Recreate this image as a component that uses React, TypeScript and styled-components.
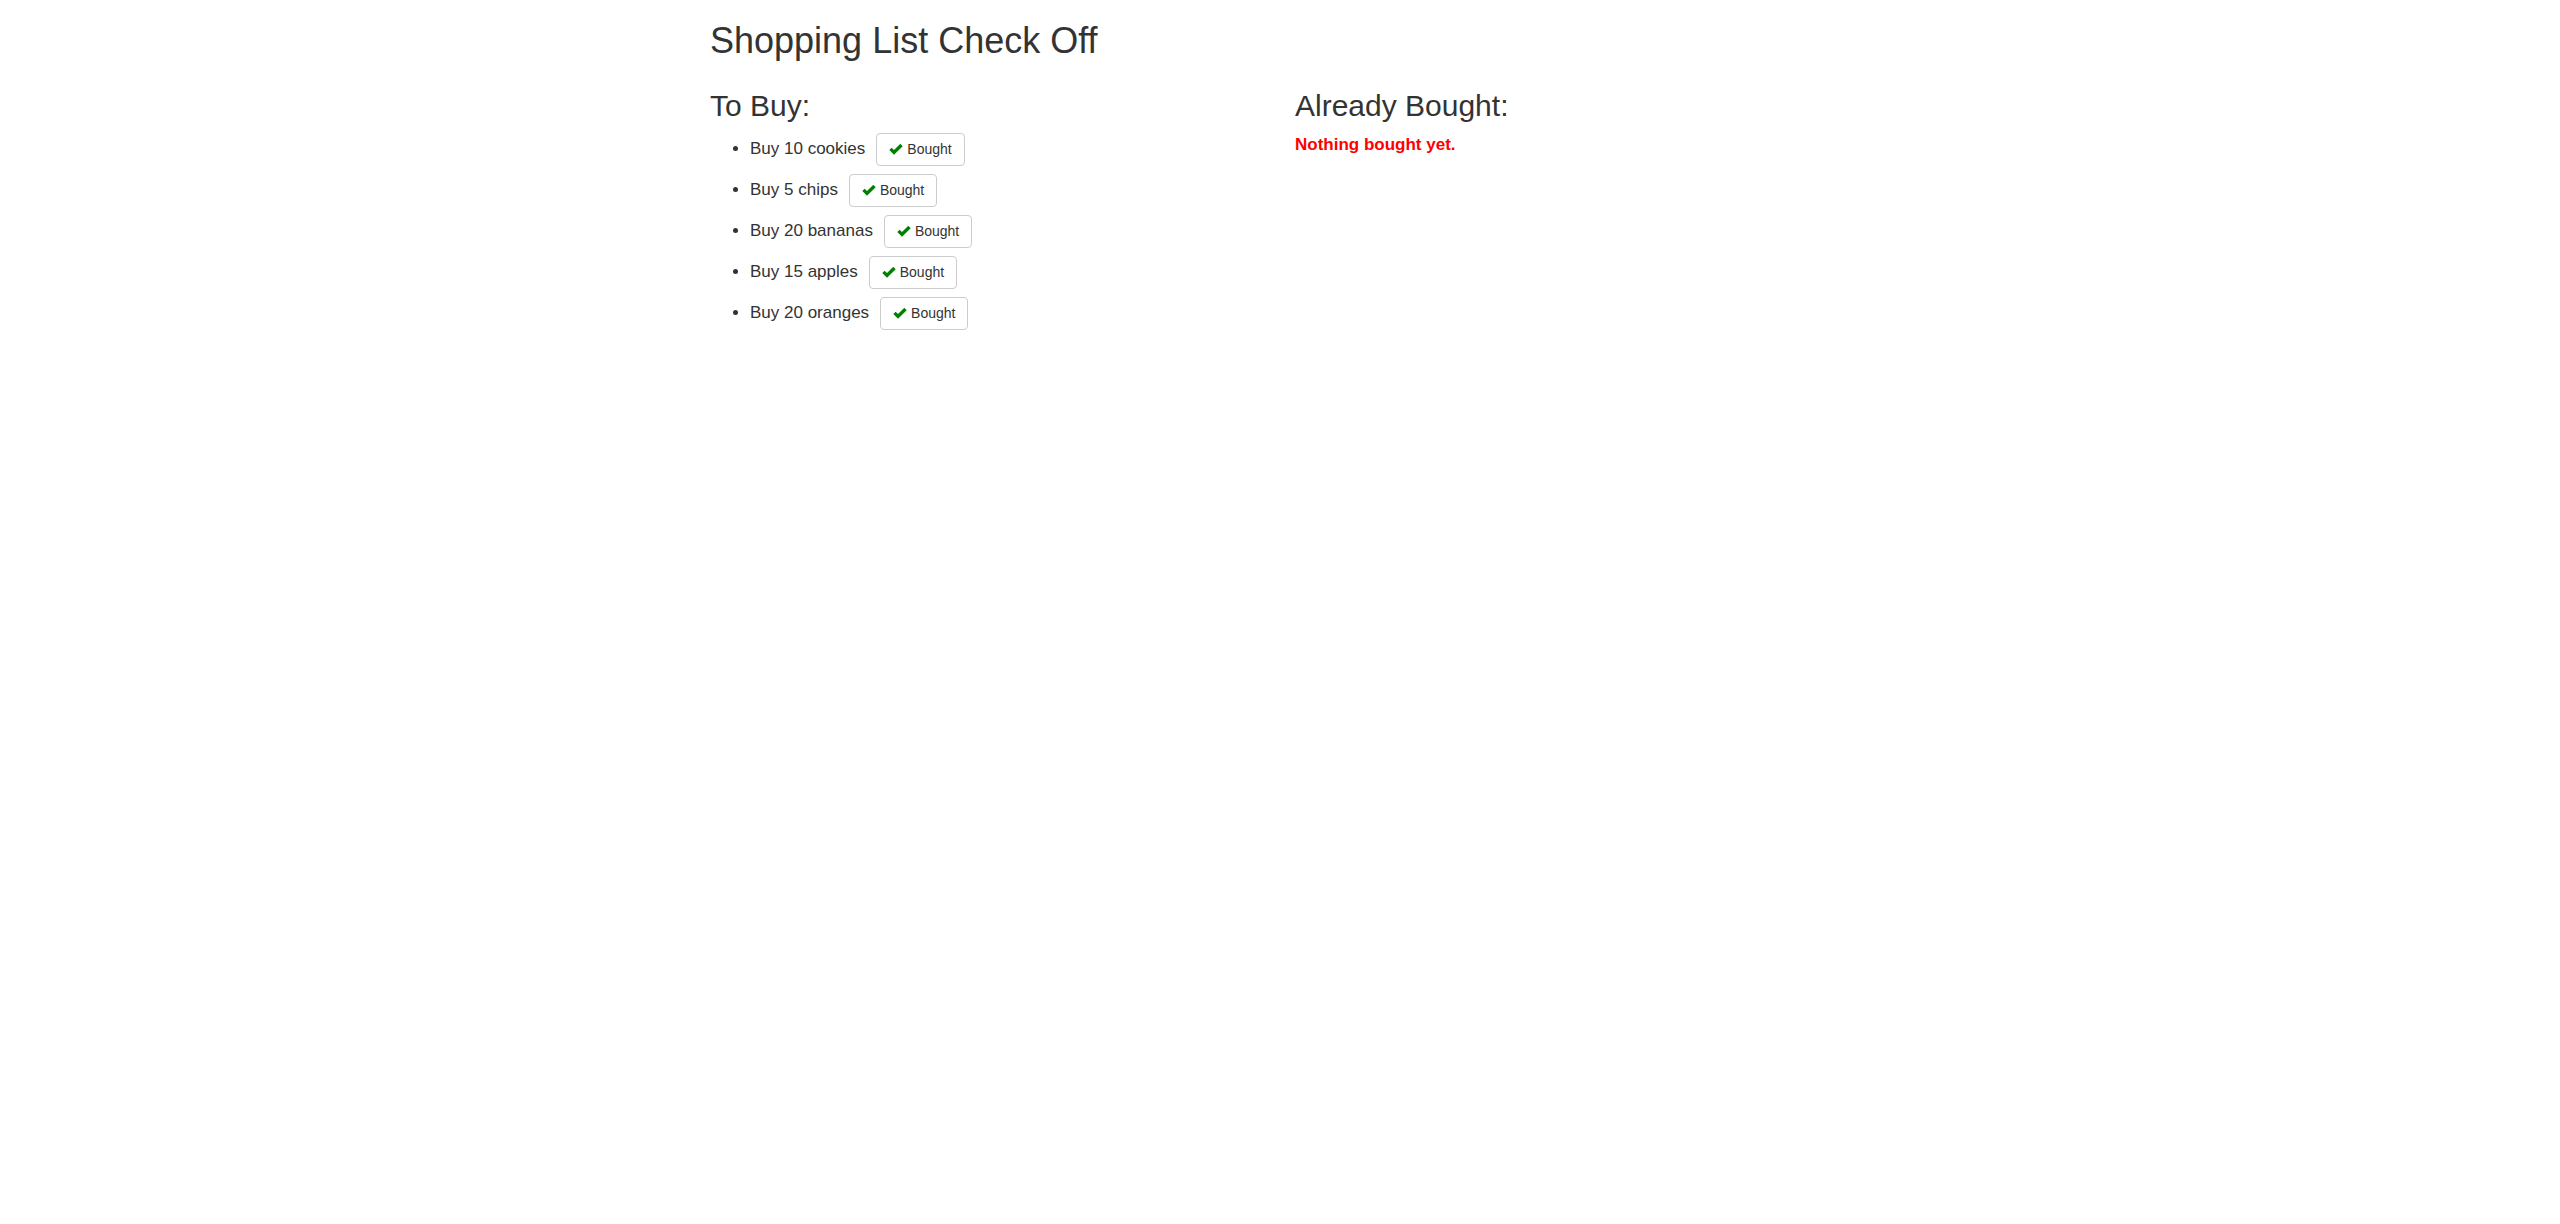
import React from "react";
import styled, { createGlobalStyle } from "styled-components";

const GlobalStyle = createGlobalStyle`
  html, body {
    margin: 0;
    padding: 0;
    background: #fff;
  }
  body {
    font-family: "Liberation Sans", Arial, sans-serif;
    font-size: 14px;
    line-height: 1.42857143;
    color: #333;
  }
  * { box-sizing: border-box; }
`;

const Container = styled.div`
  width: 1170px;
  margin: 0 auto;
  padding: 0 15px;
`;

const Title = styled.h1`
  font-size: 36px;
  font-weight: 500;
  line-height: 1.1;
  margin: 21px 0 10px;
  color: #333;
`;

const Row = styled.div`
  display: flex;
  margin: 0 -15px;
`;

const Col = styled.section`
  width: 50%;
  padding: 0 15px;
`;

const Heading = styled.h2`
  font-size: 30px;
  font-weight: 500;
  line-height: 1.1;
  margin: 18px 0 11px;
  color: #333;
`;

const List = styled.ul`
  margin: 0 0 10px;
  padding-left: 40px;
`;

const Item = styled.li`
  font-size: 17px;
  margin-bottom: 8px;
`;

const Button = styled.button`
  display: inline-block;
  margin-left: 11px;
  padding: 6px 12px;
  font-family: "Liberation Sans", Arial, sans-serif;
  font-size: 14px;
  line-height: 19px;
  color: #333;
  background: #fff;
  border: 1px solid #ccc;
  border-radius: 4px;
  vertical-align: baseline;
  cursor: pointer;
`;

const Icon = styled.svg`
  display: inline-block;
  width: 14px;
  height: 11px;
  margin-right: 4px;
  position: relative;
  top: 1px;
  vertical-align: baseline;
`;

const Empty = styled.div`
  font-size: 17px;
  font-weight: 700;
  color: #f00;
`;

const CheckIcon = () => (
  <Icon viewBox="0 0 14 11" aria-hidden="true">
    <polygon points="0.3,6 2.6,3.7 5,6.1 11.3,-0.2 13.7,2.2 5,10.8" fill="#008000" />
  </Icon>
);

const items = [
  "Buy 10 cookies",
  "Buy 5 chips",
  "Buy 20 bananas",
  "Buy 15 apples",
  "Buy 20 oranges",
];

export default function App() {
  return (
    <>
      <GlobalStyle />
      <Container>
        <Title>Shopping List Check Off</Title>
        <Row>
          <Col>
            <Heading>To Buy:</Heading>
            <List>
              {items.map((it) => (
                <Item key={it}>
                  {it}
                  <Button type="button">
                    <CheckIcon />
                    Bought
                  </Button>
                </Item>
              ))}
            </List>
          </Col>
          <Col>
            <Heading>Already Bought:</Heading>
            <Empty>Nothing bought yet.</Empty>
          </Col>
        </Row>
      </Container>
    </>
  );
}
